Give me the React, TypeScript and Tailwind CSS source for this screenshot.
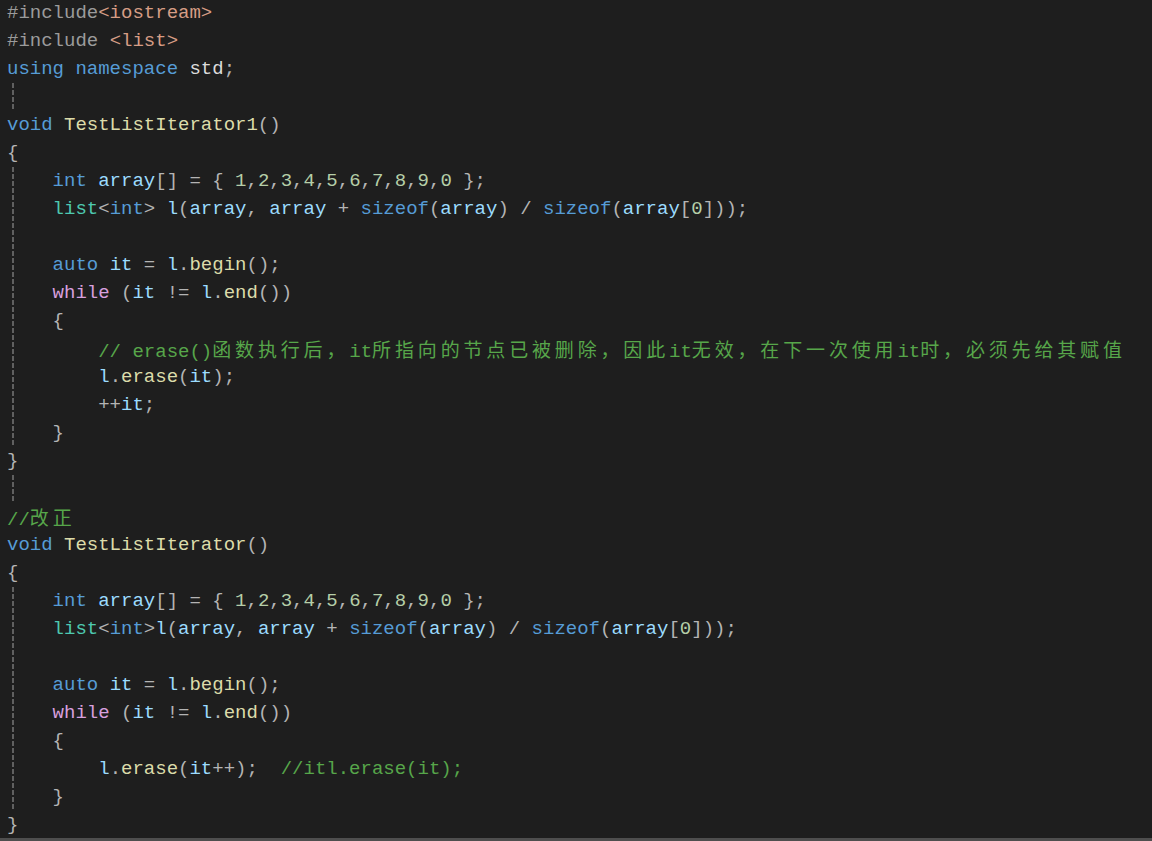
type Tok = [string, string];

const K = "text-[#569cd6]";
const T = "text-[#4ec9b0]";
const F = "text-[#dcdcaa]";
const V = "text-[#9cdcfe]";
const N = "text-[#b5cea8]";
const P = "text-[#b4b4b4]";
const C = "text-[#57a64a]";
const M = "text-[#9b9b9b]";
const S = "text-[#d69d85]";
const W = "text-[#d8a0df]";
const D = "text-[#dcdcdc]";

const nums: Tok[] = "1,2,3,4,5,6,7,8,9,0"
  .split(",")
  .flatMap((n, i) => (i === 0 ? [[N, n] as Tok] : [[P, ","] as Tok, [N, n] as Tok]));

const arrayLine: Tok[] = [[P, "    "], [K, "int "], [V, "array"], [P, "[] = { "], ...nums, [P, " };"]];

const listLine = (gap: string): Tok[] => [
  [P, "    "], [T, "list"], [P, "<"], [K, "int"], [P, ">" + gap], [V, "l"], [P, "("], [V, "array"], [P, ", "],
  [V, "array"], [P, " + "], [K, "sizeof"], [P, "("], [V, "array"], [P, ") / "], [K, "sizeof"], [P, "("],
  [V, "array"], [P, "["], [N, "0"], [P, "]));"],
];

const autoLine: Tok[] = [[P, "    "], [K, "auto "], [V, "it"], [P, " = "], [V, "l"], [P, "."], [F, "begin"], [P, "();"]];
const whileLine: Tok[] = [[P, "    "], [W, "while"], [P, " ("], [V, "it"], [P, " != "], [V, "l"], [P, "."], [F, "end"], [P, "())"]];

// [tokens, show indent guide]
const lines: [Tok[], boolean][] = [
  [[[M, "#include"], [S, "<iostream>"]], false],
  [[[M, "#include "], [S, "<list>"]], false],
  [[[K, "using namespace "], [D, "std"], [P, ";"]], false],
  [[], true],
  [[[K, "void "], [F, "TestListIterator1"], [P, "()"]], false],
  [[[P, "{"]], false],
  [arrayLine, true],
  [listLine(" "), true],
  [[], true],
  [autoLine, true],
  [whileLine, true],
  [[[P, "    {"]], true],
  [[[P, "        "], [C, "// erase()函数执行后，it所指向的节点已被删除，因此it无效，在下一次使用it时，必须先给其赋值"]], true],
  [[[P, "        "], [V, "l"], [P, "."], [F, "erase"], [P, "("], [V, "it"], [P, ");"]], true],
  [[[P, "        ++"], [V, "it"], [P, ";"]], true],
  [[[P, "    }"]], true],
  [[[P, "}"]], false],
  [[], true],
  [[[C, "//改正"]], false],
  [[[K, "void "], [F, "TestListIterator"], [P, "()"]], false],
  [[[P, "{"]], false],
  [arrayLine, true],
  [listLine(""), true],
  [[], true],
  [autoLine, true],
  [whileLine, true],
  [[[P, "    {"]], true],
  [[[P, "        "], [V, "l"], [P, "."], [F, "erase"], [P, "("], [V, "it"], [P, "++);  "], [C, "//itl.erase(it);"]], true],
  [[[P, "    }"]], true],
  [[[P, "}"]], false],
];

// CJK glyphs take two cells in the editor's font
function Cells({ text }: { text: string }) {
  const parts = text.split(/([\u3000-\u9fff\uff00-\uffef]+)/);
  return (
    <>
      {parts.map((p, i) =>
        i % 2 === 1 ? (
          <span key={i} className="tracking-[3.84px] [font-family:'Noto_Sans_CJK_SC',sans-serif]">
            {p}
          </span>
        ) : (
          p
        )
      )}
    </>
  );
}

export default function App() {
  return (
    <div className="h-[841px] flex flex-col bg-[#1e1e1e] overflow-hidden">
      <div className="flex-1 overflow-hidden -mt-[1px] pl-[7px] text-[19px] leading-[28px] [font-family:'Liberation_Mono','Noto_Sans_CJK_SC',monospace]">
        {lines.map(([toks, guide], i) => (
          <div key={i} className="relative h-[28px] whitespace-pre">
            {guide && (
              <span className="absolute left-[5px] top-0 bottom-0 w-[2px] bg-[repeating-linear-gradient(to_bottom,#606060_0_5px,transparent_5px_7px)]" />
            )}
            {toks.map(([c, t], j) => (
              <span key={j} className={c}>
                <Cells text={t} />
              </span>
            ))}
          </div>
        ))}
      </div>
      <div className="h-[3px] bg-[#4e4e4e]" />
    </div>
  );
}
